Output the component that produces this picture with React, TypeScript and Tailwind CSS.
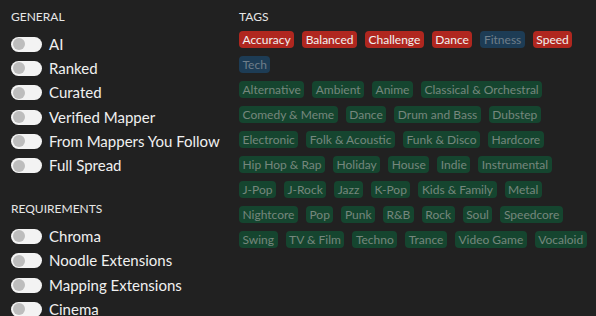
const general = ['AI', 'Ranked', 'Curated', 'Verified Mapper', 'From Mappers You Follow', 'Full Spread'];
const requirements = ['Chroma', 'Noodle Extensions', 'Mapping Extensions', 'Cinema'];

const styleTags = [
  { label: 'Accuracy', on: true },
  { label: 'Balanced', on: true },
  { label: 'Challenge', on: true },
  { label: 'Dance', on: true },
  { label: 'Fitness', on: false },
  { label: 'Speed', on: true },
  { label: 'Tech', on: false },
];

const genres = [
  'Alternative', 'Ambient', 'Anime', 'Classical & Orchestral',
  'Comedy & Meme', 'Dance', 'Drum and Bass', 'Dubstep',
  'Electronic', 'Folk & Acoustic', 'Funk & Disco', 'Hardcore',
  'Hip Hop & Rap', 'Holiday', 'House', 'Indie', 'Instrumental',
  'J-Pop', 'J-Rock', 'Jazz', 'K-Pop', 'Kids & Family', 'Metal',
  'Nightcore', 'Pop', 'Punk', 'R&B', 'Rock', 'Soul', 'Speedcore',
  'Swing', 'TV & Film', 'Techno', 'Trance', 'Video Game', 'Vocaloid',
];

function Toggle({ label }: { label: string }) {
  return (
    <div className="flex items-center gap-[7px] h-[24.3px]">
      <div className="relative w-[31px] h-[15px] rounded-full bg-[#f3f3f3] shrink-0">
        <div className="absolute left-[1.5px] top-[1.5px] w-[12px] h-[12px] rounded-full bg-[#bdbdbd]" />
      </div>
      <span className="text-[15px] text-[#f0f0f0]">{label}</span>
    </div>
  );
}

function Heading({ children }: { children: string }) {
  return <h3 className="text-[12px] leading-[16px] uppercase text-[#e6e6e6] mb-[7px]">{children}</h3>;
}

export default function App() {
  return (
    <div
      className="w-[596px] h-[316px] overflow-hidden bg-[#212121] flex pl-[11px] pt-[9px]"
      style={{ fontFamily: 'Lato, "Open Sans", sans-serif' }}
    >
      <div className="w-[228px] shrink-0">
        <Heading>General</Heading>
        {general.map((g) => (
          <Toggle key={g} label={g} />
        ))}
        <div className="mt-[23.5px]">
          <Heading>Requirements</Heading>
          {requirements.map((r) => (
            <Toggle key={r} label={r} />
          ))}
        </div>
      </div>

      <div className="flex-1">
        <h3 className="text-[12px] leading-[16px] uppercase text-[#e6e6e6] mb-[6px]">Tags</h3>
        <div className="flex flex-wrap gap-x-[8px] gap-y-[8px]">
          {styleTags.map((t) => (
            <span
              key={t.label}
              className={
                t.on
                  ? 'h-[17px] px-[3.5px] rounded-[4px] text-[12px] leading-[17px] bg-[#b0271f] text-[#f2f2f2]'
                  : 'h-[17px] px-[3.5px] rounded-[4px] text-[12px] leading-[17px] bg-[#1d3c55] text-[#6f7e8a]'
              }
            >
              {t.label}
            </span>
          ))}
        </div>
        <div className="flex flex-wrap gap-x-[8px] gap-y-[8px] mt-[8px]">
          {genres.map((g) => (
            <span
              key={g}
              className="h-[17px] px-[3.5px] rounded-[4px] text-[12px] leading-[17px] bg-[#15452f] text-[#75877d]"
            >
              {g}
            </span>
          ))}
        </div>
      </div>
    </div>
  );
}
